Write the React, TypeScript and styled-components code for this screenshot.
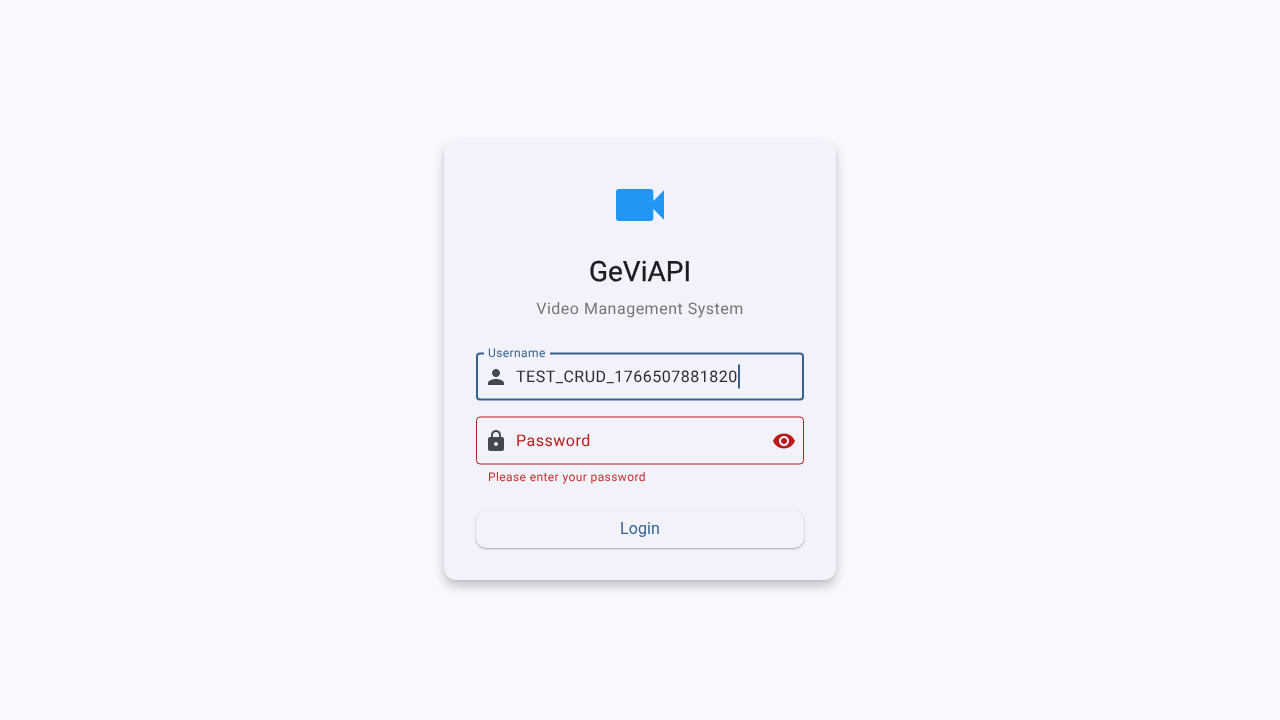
import styled, { createGlobalStyle } from 'styled-components';

const GlobalStyle = createGlobalStyle`
  html, body {
    margin: 0;
    height: 100%;
    background: #f8f9ff;
  }
  #root {
    height: 100%;
  }
`;

const Page = styled.div`
  height: 720px;
  display: flex;
  align-items: center;
  justify-content: center;
  font-family: Roboto, sans-serif;
  text-rendering: geometricPrecision;
`;

const Card = styled.div`
  box-sizing: border-box;
  width: 392px;
  height: 440px;
  padding: 33px 32px 32px;
  display: flex;
  flex-direction: column;
  background: #f2f3fa;
  border-radius: 12px;
  box-shadow: 0 6px 11px rgba(0, 0, 0, 0.22), 0 1px 3px rgba(0, 0, 0, 0.08);
  will-change: transform;
`;

const Logo = styled.svg`
  width: 64px;
  height: 64px;
  flex: none;
  align-self: center;
  fill: #2196f3;
`;

const Title = styled.h1`
  margin: 17px 0 0;
  font-size: 28px;
  line-height: 36px;
  font-weight: 400;
  -webkit-text-stroke: 0.3px #191c20;
  color: #191c20;
  text-align: center;
`;

const Subtitle = styled.p`
  margin: 7px 0 0;
  font-size: 16px;
  line-height: 24px;
  letter-spacing: 0.5px;
  color: #757575;
  text-align: center;
`;

const Field = styled.div`
  position: relative;
  box-sizing: border-box;
  height: 48px;
  flex: none;
  display: flex;
  align-items: center;
  border-radius: 4px;
  transform: translateY(0.5px);
`;

const UsernameField = styled(Field)`
  margin-top: 31px;
  padding: 0 6px;
  border: 2px solid #36618e;
`;

const PasswordField = styled(Field)`
  margin-top: 16px;
  padding: 0 7px;
  border: 1px solid #ba1a1a;
`;

const FloatingLabel = styled.label`
  position: absolute;
  top: -10px;
  left: 6px;
  padding: 0 4px;
  background: #f2f3fa;
  font-size: 12px;
  line-height: 16px;
  letter-spacing: 0.4px;
  color: #36618e;
`;

const LeadIcon = styled.svg`
  width: 24px;
  height: 24px;
  flex: none;
  fill: #43474e;
  transform: translateY(0.5px);
`;

const Value = styled.span`
  margin-left: 8px;
  font-size: 16px;
  line-height: 24px;
  letter-spacing: 0.5px;
  color: #2b2e33;
`;

const Caret = styled.span`
  width: 2px;
  height: 24px;
  flex: none;
  background: #36618e;
`;

const Placeholder = styled.span`
  flex: 1;
  margin-left: 8px;
  font-size: 16px;
  line-height: 24px;
  letter-spacing: 0.5px;
  color: #ba1a1a;
`;

const TrailIcon = styled.svg`
  width: 24px;
  height: 24px;
  flex: none;
  fill: #ba1a1a;
  transform: translateY(0.5px);
`;

const ErrorText = styled.div`
  margin: 5px 0 0;
  padding-left: 12px;
  font-size: 12px;
  line-height: 16px;
  letter-spacing: 0.4px;
  color: #c4302f;
`;

const LoginButton = styled.button`
  margin-top: 25px;
  height: 38px;
  flex: none;
  padding: 0 0 1px;
  border: none;
  border-radius: 10px;
  background: #f2f3fa;
  box-shadow: 0 1px 2px rgba(0, 0, 0, 0.32), 0 0 1px rgba(0, 0, 0, 0.06);
  font-family: inherit;
  font-size: 16px;
  letter-spacing: 0.1px;
  font-weight: 400;
  color: #36618e;
`;

export default function App() {
  return (
    <>
      <GlobalStyle />
      <Page>
        <Card>
          <Logo viewBox="0 0 24 24">
            <path d="M17 10.5V7c0-.55-.45-1-1-1H4c-.55 0-1 .45-1 1v10c0 .55.45 1 1 1h12c.55 0 1-.45 1-1v-3.5l4 4v-11l-4 4z" />
          </Logo>
          <Title>GeViAPI</Title>
          <Subtitle>Video Management System</Subtitle>
          <UsernameField>
            <FloatingLabel>Username</FloatingLabel>
            <LeadIcon viewBox="0 0 24 24">
              <path d="M12 12c2.21 0 4-1.79 4-4s-1.79-4-4-4-4 1.79-4 4 1.79 4 4 4zm0 2c-2.67 0-8 1.34-8 4v2h16v-2c0-2.66-5.33-4-8-4z" />
            </LeadIcon>
            <Value>TEST_CRUD_1766507881820</Value>
            <Caret />
          </UsernameField>
          <PasswordField>
            <LeadIcon viewBox="0 0 24 24">
              <path d="M18 8h-1V6c0-2.76-2.24-5-5-5S7 3.24 7 6v2H6c-1.1 0-2 .9-2 2v10c0 1.1.9 2 2 2h12c1.1 0 2-.9 2-2V10c0-1.1-.9-2-2-2zm-6 9c-1.1 0-2-.9-2-2s.9-2 2-2 2 .9 2 2-.9 2-2 2zm3.1-9H8.9V6c0-1.71 1.39-3.1 3.1-3.1 1.71 0 3.1 1.39 3.1 3.1v2z" />
            </LeadIcon>
            <Placeholder>Password</Placeholder>
            <TrailIcon viewBox="0 0 24 24">
              <path d="M12 4.5C7 4.5 2.73 7.61 1 12c1.73 4.39 6 7.5 11 7.5s9.27-3.11 11-7.5c-1.73-4.39-6-7.5-11-7.5zM12 17c-2.76 0-5-2.24-5-5s2.24-5 5-5 5 2.24 5 5-2.24 5-5 5zm0-8c-1.66 0-3 1.34-3 3s1.34 3 3 3 3-1.34 3-3-1.34-3-3-3z" />
            </TrailIcon>
          </PasswordField>
          <ErrorText>Please enter your password</ErrorText>
          <LoginButton>Login</LoginButton>
        </Card>
      </Page>
    </>
  );
}
